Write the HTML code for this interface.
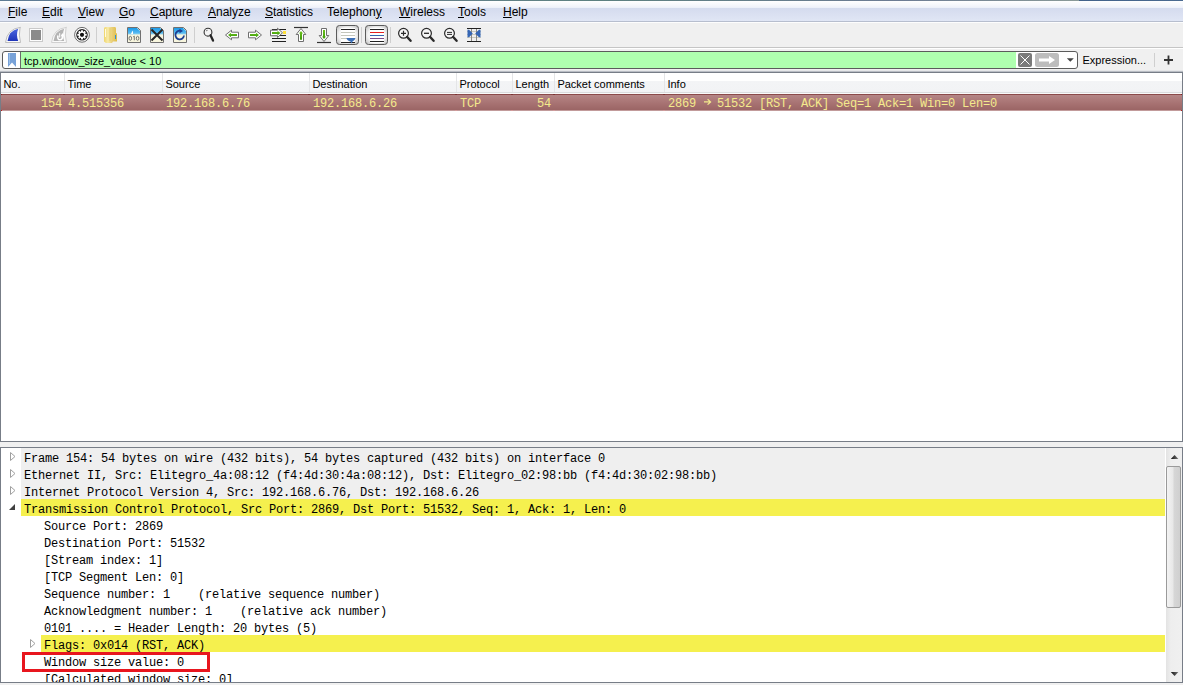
<!DOCTYPE html>
<html><head><meta charset="utf-8">
<style>
*{margin:0;padding:0;box-sizing:border-box}
html,body{width:1183px;height:685px;overflow:hidden;background:#f0f0f0;font-family:"Liberation Sans",sans-serif;font-size:11px;color:#000}
.abs{position:absolute}
#topline{left:0;top:0;width:1183px;height:1px;background:linear-gradient(90deg,#5d7b95 0,#6a8194 300px,#5d8080 600px,#6d7c94 900px,#8a9a98 1079px,#42628a 1079px,#4a6a90 100%)}
#menubar{left:0;top:1px;width:1183px;height:21px;background:linear-gradient(#ffffff 0,#f3f5fb 5px,#ebeff8 7px,#d4dbee 7px,#dae0f1 13px,#e0e6f5 20px);border-bottom:1px solid #b7bece}
.mi{position:absolute;top:4px;font-size:12px;line-height:14px;color:#000}
.mi u{text-decoration:underline;text-underline-offset:1px;text-decoration-thickness:1px}
#toolbar{left:0;top:22px;width:1183px;height:26px;background:#f0f0f0;border-top:1px solid #fdfdfd;border-bottom:1px solid #c5c5c5}
#filterwrap{left:0;top:48px;width:1183px;height:24px;background:#f0f0f0;border-top:1px solid #ffffff}
#filter{left:2px;top:51px;width:1076px;height:18px;border:1px solid #5b5b5b;border-radius:3px;background:#fff;overflow:hidden}
#filtergreen{left:17px;top:0;width:996px;height:16px;background:#afffaf;border-left:1px solid #6a6a6a}
#ftext{position:absolute;left:3px;top:2.5px;font-size:11px;line-height:13px;color:#000;white-space:pre}
#expr{left:1082.5px;top:53.5px;font-size:11px;line-height:13px;color:#000}
#plist{left:0;top:72px;width:1183px;height:370px;background:#fff;border:1px solid #777d87}
#phead{left:0;top:0;width:1181px;height:21px;background:linear-gradient(#ffffff 0,#ffffff 8px,#f3f4f6 8px,#f2f3f5 19px,#dadbdd 19px,#dadbdd 20px,#fafafa 20px)}
.hc{position:absolute;top:5px;margin-left:-0.6px;font-size:11px;line-height:13px;color:#000}
.hs{position:absolute;top:0;width:1px;height:19px;background:#e4e5e7}
#prow{left:0;top:21px;width:1181px;height:17px;background:linear-gradient(#b58686 0,#a87373 8px,#996363 16px);border-top:1px solid #8b4a4a;border-bottom:1px solid #c29b9b}
.pc{position:absolute;top:1.5px;font-family:"Liberation Mono",monospace;font-size:12px;letter-spacing:-0.2px;line-height:14px;color:#f4ea8c;white-space:pre}
#details{left:0;top:447px;width:1183px;height:236px;background:#fff;border:1px solid #777d87;overflow:hidden}
.dr{position:absolute;left:20px;width:1144px;padding-left:3px;height:17px;font-family:"Liberation Mono",monospace;font-size:12px;letter-spacing:-0.2px;line-height:17px;padding-top:2.5px;color:#000;white-space:pre}
.gray{background:#efefef}
.yel{background:#f5f04e}
.l1{left:40px;width:1124px}
#sb{left:1165px;top:0;width:16px;height:234px;background:linear-gradient(90deg,#e3e3e3,#eeeeee 30%,#f0f0f0)}
</style></head><body>
<div id="topline" class="abs"></div>
<div id="menubar" class="abs">
 <span class="mi" style="left:8px"><u>F</u>ile</span>
 <span class="mi" style="left:42px"><u>E</u>dit</span>
 <span class="mi" style="left:78px"><u>V</u>iew</span>
 <span class="mi" style="left:119px"><u>G</u>o</span>
 <span class="mi" style="left:150px"><u>C</u>apture</span>
 <span class="mi" style="left:208px"><u>A</u>nalyze</span>
 <span class="mi" style="left:265px"><u>S</u>tatistics</span>
 <span class="mi" style="left:327px">Telephon<u>y</u></span>
 <span class="mi" style="left:399px"><u>W</u>ireless</span>
 <span class="mi" style="left:458px"><u>T</u>ools</span>
 <span class="mi" style="left:503px"><u>H</u>elp</span>
</div>
<div id="toolbar" class="abs"></div>
<svg class="abs" style="left:0;top:0" width="500" height="48" viewBox="0 0 500 48">
<defs>
<linearGradient id="finb" x1="0" y1="0" x2="0" y2="1"><stop offset="0" stop-color="#4a66e0"/><stop offset="1" stop-color="#1f34b8"/></linearGradient>
<linearGradient id="fileb" x1="0" y1="0" x2="0" y2="1"><stop offset="0" stop-color="#1b9ae8"/><stop offset=".75" stop-color="#5cbdf2"/><stop offset="1" stop-color="#f8f6de"/></linearGradient>
<linearGradient id="fold" x1="0" y1="0" x2="1" y2="0"><stop offset="0" stop-color="#efd56a"/><stop offset=".3" stop-color="#f8ebaa"/><stop offset=".6" stop-color="#ead07a"/><stop offset="1" stop-color="#dfbd48"/></linearGradient>
<linearGradient id="grn" x1="0" y1="0" x2="0" y2="1"><stop offset="0" stop-color="#6cc21c"/><stop offset="1" stop-color="#3d9a0a"/></linearGradient>
<radialGradient id="btn" cx=".5" cy=".5" r=".7"><stop offset=".55" stop-color="#f4f4f4"/><stop offset="1" stop-color="#b8b8b8"/></radialGradient>
</defs>
<!-- shark fin -->
<path d="M5.5,42.5 Q7,29 20.5,27.3 L20,28 Q18.5,35 20.5,42.5 Z" fill="#fafafa" stroke="#bdbdbd" stroke-width="1"/>
<path d="M7.5,41 Q9,30.5 18.2,28.8 Q15.8,35 18.2,41 Z" fill="url(#finb)"/>
<!-- stop -->
<rect x="29.5" y="28.5" width="13" height="13" fill="#fdfdfd" stroke="#c9c9c9"/>
<rect x="31" y="30" width="10" height="10" fill="#8b8b8b"/>
<!-- restart fin -->
<path d="M51.5,42.5 Q53,29 66.5,27.3 L66,28 Q64.5,35 66.5,42.5 Z" fill="#fafafa" stroke="#d0d0d0" stroke-width="1"/>
<path d="M53.5,41 Q55,30.5 64.2,28.8 Q61.8,35 64.2,41 Z" fill="#b4b4b4"/>
<path d="M58,35.5 Q57,39.8 60,39.8 Q62.8,39.8 62.4,35.6" fill="none" stroke="#fff" stroke-width="1.6"/>
<path d="M60.6,36.2 L62.4,33 L64.2,36.2 Z" fill="#fff"/>
<path d="M59.7,33.2 V37.5" stroke="#fff" stroke-width="1"/>
<!-- gear -->
<circle cx="82" cy="34.8" r="7.4" fill="#fff" stroke="#4a4a4a" stroke-width=".8"/>
<circle cx="82" cy="34.8" r="5.8" fill="#222"/>
<g fill="#fff" transform="translate(82 34.8)">
<circle r="3.3"/>
<rect x="-1" y="-4.6" width="2" height="9.2" rx=".4"/>
<rect x="-1" y="-4.6" width="2" height="9.2" rx=".4" transform="rotate(45)"/>
<rect x="-1" y="-4.6" width="2" height="9.2" rx=".4" transform="rotate(90)"/>
<rect x="-1" y="-4.6" width="2" height="9.2" rx=".4" transform="rotate(135)"/>
</g>
<circle cx="82" cy="34.8" r="2.1" fill="#111"/>
<!-- separators -->
<rect x="96" y="27" width="1" height="16" fill="#cfcfcf"/>
<rect x="194" y="27" width="1" height="16" fill="#cfcfcf"/>
<rect x="361" y="27" width="1" height="16" fill="#cfcfcf"/>
<rect x="390" y="27" width="1" height="16" fill="#cfcfcf"/>
<!-- folder -->
<path d="M104,28.5 Q104,27 105.5,27 L115,27 Q116,27 116,28.5 L116,33 L117,33.5 L117,41.5 L113,41.5 L112,43 L106,43 L104,41.5 Z" fill="url(#fold)"/>
<rect x="109.5" y="28" width="1" height="13" fill="#e6cd6c"/>
<rect x="105" y="29" width="1" height="8" fill="#fffbe0"/>
<rect x="115" y="35" width="1" height="4" fill="#2f8fd8"/>
<!-- file 010 -->
<path d="M127.5,27.5 L137.5,27.5 L140.5,30.5 L140.5,42.5 L127.5,42.5 Z" fill="#f8f6de" stroke="#707070"/>
<path d="M128,28 L137,28 L140,31 L140,35 L128,35 Z" fill="url(#fileb)"/>
<path d="M131,34 Q132,31 133,30.5 L133,34 Z" fill="#fff"/>
<g fill="none" stroke="#666" stroke-width=".9"><ellipse cx="130.3" cy="38.3" rx="1.3" ry="2"/><path d="M133.2,36.8 L134.3,36.2 V40.3"/><ellipse cx="137.6" cy="38.3" rx="1.3" ry="2"/></g>
<!-- close file -->
<path d="M150.5,27.5 L160.5,27.5 L163.5,30.5 L163.5,42.5 L150.5,42.5 Z" fill="#f8f6de" stroke="#707070"/>
<path d="M151,28 L160,28 L163,31 L163,35 L151,35 Z" fill="url(#fileb)"/>
<path d="M151.5,29.5 L162.5,40.5 M162.5,29.5 L151.5,40.5" stroke="#262626" stroke-width="2"/>
<!-- reload -->
<path d="M173.5,27.5 L183.5,27.5 L186.5,30.5 L186.5,42.5 L173.5,42.5 Z" fill="#f8f6de" stroke="#707070"/>
<path d="M174,28 L183,28 L186,31 L186,35 L174,35 Z" fill="url(#fileb)"/>
<path d="M184,35.5 A4.3,4.3 0 1 1 180.5,30.8" fill="none" stroke="#1c3e90" stroke-width="1.8"/>
<path d="M179.5,28.8 L183,31 L179.5,33.2 Z" fill="#1c3e90"/>
<!-- magnifier -->
<circle cx="208" cy="32.2" r="3.9" fill="#f4f4f4" stroke="#333" stroke-width="1.1"/>
<path d="M210.5,35.3 L213,40.6" stroke="#262626" stroke-width="2.3" stroke-linecap="round"/>
<path d="M206.2,30.8 L207.5,30.3" stroke="#333" stroke-width=".8"/>
<!-- back -->
<path d="M225.5,35 L231.5,30.2 L231.5,32.2 L238.5,32.2 L238.5,37.8 L231.5,37.8 L231.5,39.8 Z" fill="#fff" stroke="#6e6e6e" stroke-width="1" stroke-linejoin="round"/>
<path d="M228,35 L231,32.8 L231,34 L237,34 L237,36 L231,36 L231,37.2 Z" fill="url(#grn)"/>
<!-- forward -->
<path d="M261.5,35 L255.5,30.2 L255.5,32.2 L248.5,32.2 L248.5,37.8 L255.5,37.8 L255.5,39.8 Z" fill="#fff" stroke="#6e6e6e" stroke-width="1" stroke-linejoin="round"/>
<path d="M259,35 L256,32.8 L256,34 L250,34 L250,36 L256,36 L256,37.2 Z" fill="url(#grn)"/>
<!-- go to packet -->
<path d="M272,29.5 H286 M272,35.5 H286 M272,38.5 H286 M272,41.5 H286" stroke="#222" stroke-width="1"/>
<rect x="283" y="31" width="3" height="3" fill="#ffe03a"/>
<path d="M282.5,32.8 L277.5,28.2 L277.5,30.2 L270.5,30.2 L270.5,35.8 L277.5,35.8 L277.5,37.5 Z" fill="#fff" stroke="#6e6e6e" stroke-width="1" stroke-linejoin="round"/>
<path d="M280.5,33 L277.5,30.8 L277.5,32 L272,32 L272,34 L277.5,34 L277.5,35.2 Z" fill="url(#grn)"/>
<!-- first packet -->
<path d="M294,27.5 H308" stroke="#333" stroke-width="1.2"/>
<path d="M301,28.5 L305.8,34.5 L303.5,34.5 L303.5,41.5 L298.5,41.5 L298.5,34.5 L296.2,34.5 Z" fill="#fff" stroke="#6e6e6e" stroke-width="1" stroke-linejoin="round"/>
<path d="M301,31 L303,33.5 L302,33.5 L302,39.8 L300,39.8 L300,33.5 L299,33.5 Z" fill="url(#grn)"/>
<!-- last packet -->
<path d="M317,42.5 H331" stroke="#333" stroke-width="1.2"/>
<path d="M324,41.5 L328.8,35.5 L326.5,35.5 L326.5,28.5 L321.5,28.5 L321.5,35.5 L319.2,35.5 Z" fill="#fff" stroke="#6e6e6e" stroke-width="1" stroke-linejoin="round"/>
<path d="M324,39 L326,36.5 L325,36.5 L325,30 L323,30 L323,36.5 L322,36.5 Z" fill="url(#grn)"/>
<!-- autoscroll (pressed) -->
<rect x="336.5" y="25.5" width="22" height="19" rx="3" fill="url(#btn)" stroke="#5c5c5c"/>
<rect x="341" y="28" width="14" height="15" fill="#fff"/>
<path d="M341,29.5 H355 M341,42.5 H355" stroke="#222"/>
<path d="M341,32.5 H355 M341,35.5 H355 M341,38.5 H355" stroke="#c4c6bc"/>
<path d="M346.5,38 H355.5 Q355,40.5 352.5,41.5 L351.5,43.5 L350.5,41.5 Q347,40.5 346.5,38 Z" fill="#3b6fb8"/>
<!-- colorize (pressed) -->
<rect x="365.5" y="25.5" width="22" height="19" rx="3" fill="url(#btn)" stroke="#5c5c5c"/>
<rect x="370" y="28" width="14" height="15" fill="#fff"/>
<path d="M370,29.5 H384 M370,41.5 H384" stroke="#222"/>
<path d="M370,32.5 H384" stroke="#e82020"/>
<path d="M370,35.5 H384" stroke="#3466b0"/>
<path d="M370,38.5 H384" stroke="#7a4a8a"/>
<!-- zoom in/out/normal -->
<g stroke="#2a2a2a">
<circle cx="403.5" cy="33.3" r="4.9" fill="#f6f6f6" stroke-width="1.2"/>
<path d="M407.2,37 L410.6,40.8" stroke-width="2.4" stroke-linecap="round"/>
<path d="M401,33.3 H406 M403.5,30.8 V35.8" stroke-width="1.2"/>
<circle cx="426.5" cy="33.3" r="4.9" fill="#f6f6f6" stroke-width="1.2"/>
<path d="M430.2,37 L433.6,40.8" stroke-width="2.4" stroke-linecap="round"/>
<path d="M424,33.3 H429" stroke-width="1.3"/>
<circle cx="449.5" cy="33.3" r="4.9" fill="#f6f6f6" stroke-width="1.2"/>
<path d="M453.2,37 L456.6,40.8" stroke-width="2.4" stroke-linecap="round"/>
<path d="M447,32.4 H452 M447,34.4 H452" stroke-width="1"/>
</g>
<!-- resize columns -->
<path d="M467,31.5 H481 M467,34.5 H481 M467,37.5 H481" stroke="#c9cabf"/>
<path d="M471.5,28 V42 M476.5,28 V42" stroke="#8a8a86"/>
<path d="M467,28.5 H481 M467,41.5 H481" stroke="#222" stroke-width="1.1"/>
<path d="M467.5,29.8 L469,29.8 L472.8,33.5 L469,37.2 L467.5,37.2 Z M480.5,29.8 L479,29.8 L475.2,33.5 L479,37.2 L480.5,37.2 Z" fill="#3566b5"/>
</svg>
<div id="filterwrap" class="abs"></div>
<div class="abs" style="left:0;top:70px;width:1183px;height:1px;background:#e6e7e9"></div><div class="abs" style="left:0;top:71px;width:1183px;height:1px;background:#b9bdc4"></div>
<div id="filter" class="abs">
 <div id="filtergreen" class="abs"><span id="ftext">tcp.window_size_value &lt; 10</span></div>
 <svg class="abs" style="left:0;top:0" width="1076" height="17" viewBox="2 52 1076 17">
  <path d="M7,53 H15 V67 L11,62.5 L7,67 Z" fill="#78a2d8"/>
  <path d="M8.5,53.5 V64" stroke="#9cc0e8" stroke-width="1" fill="none"/>
  <rect x="1017" y="53" width="14" height="14" rx="2" fill="#7a7a7a"/>
  <path d="M1019.5,55.5 L1028.5,64.5 M1028.5,55.5 L1019.5,64.5" stroke="#fff" stroke-width="1"/>
  <rect x="1034" y="53" width="24" height="14" rx="2.5" fill="#bdbdbd"/>
  <path d="M1038,58.5 H1048 V56 L1054,60 L1048,64 V61.5 H1038 Z" fill="#fff"/>
  <path d="M1065.8,58.3 H1072.8 L1069.3,61.8 Z" fill="#454545"/>
 </svg>
</div>
<span class="abs" id="expr">Expression...</span>
<div class="abs" style="left:1154px;top:53px;width:1px;height:14px;background:#cfcfcf"></div>
<svg class="abs" style="left:0;top:0" width="1183" height="72" viewBox="0 0 1183 72"><path d="M1164,60 H1173 M1168.5,55.5 V64.5" stroke="#333" stroke-width="1.8"/></svg>
<div id="plist" class="abs">
 <div id="phead" class="abs">
  <span class="hc" style="left:3px">No.</span><div class="hs" style="left:63px"></div>
  <span class="hc" style="left:67px">Time</span><div class="hs" style="left:161px"></div>
  <span class="hc" style="left:165px">Source</span><div class="hs" style="left:308px"></div>
  <span class="hc" style="left:312px">Destination</span><div class="hs" style="left:455px"></div>
  <span class="hc" style="left:459px">Protocol</span><div class="hs" style="left:511px"></div>
  <span class="hc" style="left:515px">Length</span><div class="hs" style="left:553px"></div>
  <span class="hc" style="left:557px">Packet comments</span><div class="hs" style="left:663px"></div>
  <span class="hc" style="left:667px">Info</span>
 </div>
 <div id="prow" class="abs">
  <div class="abs" style="left:62px;top:-1px;width:2px;height:1px;background:#7a3232"></div><div class="abs" style="left:62px;top:15px;width:2px;height:1px;background:#d49a9a"></div><div class="abs" style="left:160px;top:-1px;width:2px;height:1px;background:#7a3232"></div><div class="abs" style="left:160px;top:15px;width:2px;height:1px;background:#d49a9a"></div><div class="abs" style="left:307px;top:-1px;width:2px;height:1px;background:#7a3232"></div><div class="abs" style="left:307px;top:15px;width:2px;height:1px;background:#d49a9a"></div><div class="abs" style="left:454px;top:-1px;width:2px;height:1px;background:#7a3232"></div><div class="abs" style="left:454px;top:15px;width:2px;height:1px;background:#d49a9a"></div><div class="abs" style="left:510px;top:-1px;width:2px;height:1px;background:#7a3232"></div><div class="abs" style="left:510px;top:15px;width:2px;height:1px;background:#d49a9a"></div><div class="abs" style="left:552px;top:-1px;width:2px;height:1px;background:#7a3232"></div><div class="abs" style="left:552px;top:15px;width:2px;height:1px;background:#d49a9a"></div><div class="abs" style="left:662px;top:-1px;width:2px;height:1px;background:#7a3232"></div><div class="abs" style="left:662px;top:15px;width:2px;height:1px;background:#d49a9a"></div><div class="abs" style="left:0;top:-1px;width:1px;height:1px;background:#8a1f1f"></div><div class="abs" style="left:0;top:15px;width:1px;height:1px;background:#b02020"></div><div class="abs" style="left:1180px;top:-1px;width:1px;height:1px;background:#8a1f1f"></div><div class="abs" style="left:1180px;top:15px;width:1px;height:1px;background:#b02020"></div>
  <span class="pc" style="left:40px">154</span>
  <span class="pc" style="left:67px">4.515356</span>
  <span class="pc" style="left:165px">192.168.6.76</span>
  <span class="pc" style="left:312px">192.168.6.26</span>
  <span class="pc" style="left:459px">TCP</span>
  <span class="pc" style="left:536px">54</span>
  <span class="pc" style="left:667px">2869   51532 [RST, ACK] Seq=1 Ack=1 Win=0 Len=0</span>
  <svg class="abs" style="left:702px;top:3px" width="9" height="8" viewBox="0 0 9 8"><path d="M1,3.9 H7.6 M4.6,1.2 L7.6,3.9 L4.6,6.6" fill="none" stroke="#f4ea8c" stroke-width="1.2"/></svg>
 </div>
</div>
<div id="details" class="abs">
 <div class="dr gray" style="top:0px">Frame 154: 54 bytes on wire (432 bits), 54 bytes captured (432 bits) on interface 0</div>
 <div class="dr gray" style="top:17px">Ethernet II, Src: Elitegro_4a:08:12 (f4:4d:30:4a:08:12), Dst: Elitegro_02:98:bb (f4:4d:30:02:98:bb)</div>
 <div class="dr gray" style="top:34px">Internet Protocol Version 4, Src: 192.168.6.76, Dst: 192.168.6.26</div>
 <div class="dr yel" style="top:51px">Transmission Control Protocol, Src Port: 2869, Dst Port: 51532, Seq: 1, Ack: 1, Len: 0</div>
 <div class="dr l1" style="top:68px">Source Port: 2869</div>
 <div class="dr l1" style="top:85px">Destination Port: 51532</div>
 <div class="dr l1" style="top:102px">[Stream index: 1]</div>
 <div class="dr l1" style="top:119px">[TCP Segment Len: 0]</div>
 <div class="dr l1" style="top:136px">Sequence number: 1    (relative sequence number)</div>
 <div class="dr l1" style="top:153px">Acknowledgment number: 1    (relative ack number)</div>
 <div class="dr l1" style="top:170px">0101 .... = Header Length: 20 bytes (5)</div>
 <div class="dr yel l1" style="top:187px">Flags: 0x014 (RST, ACK)</div>
 <div class="dr l1" style="top:204px">Window size value: 0</div>
 <div class="dr l1" style="top:221px">[Calculated window size: 0]</div>

 <svg class="abs" style="left:0;top:0" width="40" height="234" viewBox="1 448 40 234">
  <path d="M10.5,452.5 L15,456.5 L10.5,460.5 Z" fill="#fff" stroke="#a0a0a0" stroke-width="1" stroke-linejoin="round"/>
  <path d="M10.5,469.5 L15,473.5 L10.5,477.5 Z" fill="#fff" stroke="#a0a0a0" stroke-width="1" stroke-linejoin="round"/>
  <path d="M10.5,486.5 L15,490.5 L10.5,494.5 Z" fill="#fff" stroke="#a0a0a0" stroke-width="1" stroke-linejoin="round"/>
  <path d="M15,504 L15,510 L9,510 Z" fill="#404040"/>
  <path d="M30.5,639.5 L35,643.5 L30.5,647.5 Z" fill="#fff" stroke="#a0a0a0" stroke-width="1" stroke-linejoin="round"/>
 </svg>
 <div class="abs" style="left:21px;top:204px;width:188px;height:20px;border:3px solid #e8161e"></div>
 <div id="sb" class="abs">
  <svg class="abs" style="left:0;top:0" width="16" height="234" viewBox="1166 448 16 234">
   <path d="M1170.8,459 L1174.6,455 L1178.4,459 Z" fill="url(#arr)"/>
   <rect x="1166.5" y="466.5" width="14" height="141" rx="1.5" fill="url(#thumb)" stroke="#9a9a9a"/>
   <defs><linearGradient id="arr" x1="0" y1="0" x2="1" y2="0"><stop offset="0" stop-color="#111"/><stop offset="1" stop-color="#777"/></linearGradient><linearGradient id="thumb" x1="0" y1="0" x2="1" y2="0"><stop offset="0" stop-color="#f4f4f4"/><stop offset=".45" stop-color="#e8e8e8"/><stop offset=".55" stop-color="#d6d6d6"/><stop offset="1" stop-color="#cfcfcf"/></linearGradient></defs>
   <path d="M1170.8,672 L1178.4,672 L1174.6,676 Z" fill="url(#arr)"/>
  </svg>
 </div>
</div>
</body></html>
